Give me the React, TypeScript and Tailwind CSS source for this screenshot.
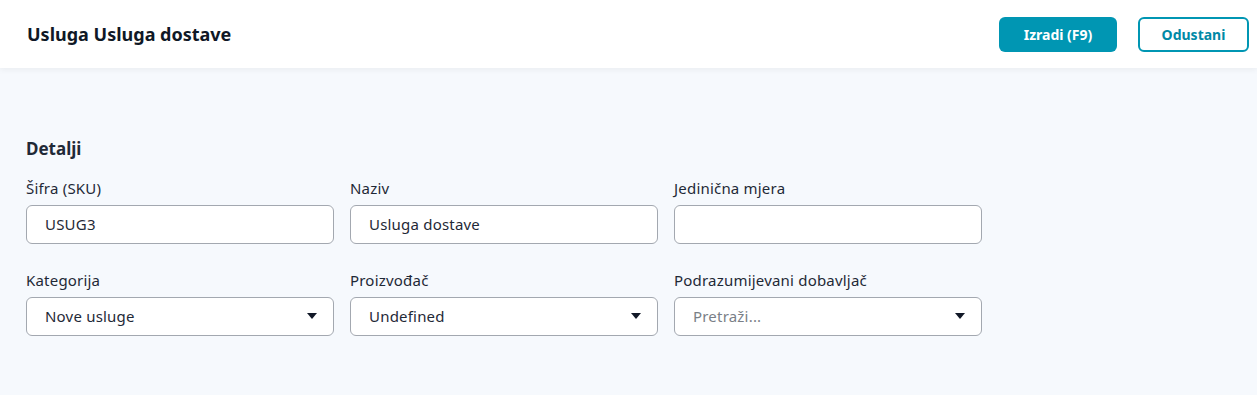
import { useState } from 'react';

function Caret() {
  return (
    <svg width="10" height="6" viewBox="0 0 10 6" className="shrink-0">
      <path d="M0 0h10L5 6z" fill="#111827" />
    </svg>
  );
}

interface FieldProps {
  label: string;
  value?: string;
  placeholder?: string;
  select?: boolean;
}

function Field({ label, value, placeholder, select }: FieldProps) {
  const [v, setV] = useState(value ?? '');
  return (
    <div className="flex flex-col w-[308px]">
      <label className="text-[15px] leading-5 text-[#1f2937] mb-[7px] tracking-[0.2px]">{label}</label>
      <div className="h-[39px] rounded-[6px] border border-[#a3a8b0] bg-white flex items-center pl-[18px] pr-[16px]">
        {select ? (
          <>
            <span className={`flex-1 text-[15px] tracking-[0.2px] ${v ? 'text-[#1f2937]' : 'text-[#7a7f87]'}`}>
              {v || placeholder}
            </span>
            <Caret />
          </>
        ) : (
          <input
            className="flex-1 bg-transparent outline-none text-[15px] tracking-[0.2px] text-[#1f2937]"
            value={v}
            onChange={(e) => setV(e.target.value)}
          />
        )}
      </div>
    </div>
  );
}

export default function App() {
  return (
    <div className="min-h-[395px] bg-[#f6f9fd] font-['Noto_Sans',sans-serif] text-[#1f2937]">
      <header className="h-[68px] bg-white shadow-[0_2px_6px_rgba(0,0,0,0.05)] flex items-center pl-[27px] pr-[8px]">
        <h1 className="flex-1 text-[18px] font-bold text-[#101826]">Usluga Usluga dostave</h1>
        <button className="h-[35px] w-[118px] rounded-[6px] bg-[#0096b3] text-white text-[14px] font-bold mr-[21px]">
          Izradi (F9)
        </button>
        <button className="h-[35px] w-[111px] rounded-[6px] border-2 border-[#0096b3] text-[#0089a6] text-[14px] font-bold">
          Odustani
        </button>
      </header>
      <main className="pt-[68px] px-[26px]">
        <h2 className="text-[17px] font-bold mb-[16px]">Detalji</h2>
        <div className="grid grid-cols-[308px_308px_308px] gap-x-[16px] gap-y-[26px]">
          <Field label="Šifra (SKU)" value="USUG3" />
          <Field label="Naziv" value="Usluga dostave" />
          <Field label="Jedinična mjera" />
          <Field label="Kategorija" value="Nove usluge" select />
          <Field label="Proizvođač" value="Undefined" select />
          <Field label="Podrazumijevani dobavljač" placeholder="Pretraži..." select />
        </div>
      </main>
    </div>
  );
}
